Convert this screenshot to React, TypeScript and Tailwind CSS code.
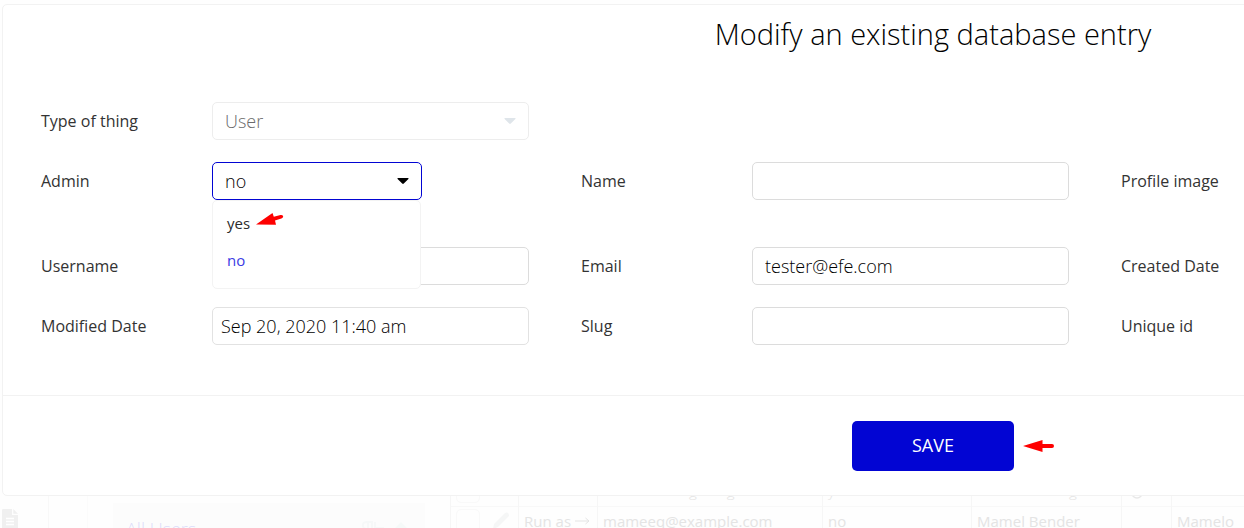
import { useState } from "react";
import type { ReactNode } from "react";

const box =
  "h-[38px] w-full appearance-none rounded-[5px] border border-[#dcdcdc] bg-white px-3 text-lg font-light text-black outline-none";

function Field({ id, label, children }: { id: string; label: string; children?: ReactNode }) {
  return (
    <div className="flex h-[38px] items-center">
      <label htmlFor={id} className="w-[171px] shrink-0 text-base text-[#333]">
        {label}
      </label>
      <div className="relative w-[317px]">
        {children ?? <input id={id} type="text" className={box} />}
      </div>
    </div>
  );
}

function Caret({ className }: { className: string }) {
  return (
    <svg viewBox="0 0 12 7" className={className} aria-hidden="true">
      <path d="M1 0h10q1 .2.4 1L6.8 5.6q-.8.8-1.6 0L.6 1Q0 .2 1 0Z" fill="currentColor" />
    </svg>
  );
}

function AdminField() {
  const [value, setValue] = useState("no");
  return (
    <div className="relative w-[210px]">
      <select
        id="admin"
        value={value}
        onChange={(e) => setValue(e.target.value)}
        className="block h-[38px] w-full appearance-none rounded-[5px] border border-[#0205d3] bg-white px-3 text-lg font-light text-black outline-none"
      >
        <option value="yes">yes</option>
        <option value="no">no</option>
      </select>
      <Caret className="pointer-events-none absolute right-[13px] top-4 h-[7px] w-3 text-black" />
      <div className="absolute left-0 top-full z-10 flex h-[89px] w-[209px] flex-col rounded-[5px] border border-[#f3f3f3] bg-white pt-1">
        {["yes", "no"].map((option) => (
          <button
            key={option}
            type="button"
            onClick={() => setValue(option)}
            className={
              option === value
                ? "flex h-[37px] items-center px-3.5 text-[15px] text-[#3a3ae4]"
                : "flex h-[37px] items-center px-3.5 text-[15px] text-[#2b2b2b]"
            }
          >
            {option}
          </button>
        ))}
        <svg viewBox="0 0 28 13" className="absolute left-[43px] top-3 h-[13px] w-7" aria-hidden="true">
          <path d="M0 11.6 16.5 0 17.8 3.8 24.5 2Q27.3 1.6 27.2 3.6 27 5 25.4 5.6L19 7.6 20 11.8Z" fill="#fe0000" />
        </svg>
      </div>
    </div>
  );
}

function Backdrop() {
  const cell = "border-x border-[#f6f6f6] px-[5px]";
  return (
    <div className="flex h-8 overflow-hidden text-[15px] text-[#e4e4e4]">
      <div className="flex w-[49px] shrink-0 border-r border-[#f8f8f8] pl-0.5 pt-[13px]">
        <svg viewBox="0 0 16 21" className="h-[21px] w-4" aria-hidden="true">
          <path d="M1 0h9v6h6v15H0V1Q0 0 1 0ZM11.300 0 16 4.800h-4.700Z" fill="#f0f0f0" />
          <path d="M4 9.500h8M4 12.500h8M4 15.500h8" stroke="#fff" strokeWidth="1.300" />
        </svg>
      </div>
      <div className="w-[39px] shrink-0 border-r border-[#fbfbfb]" />
      <div className="ml-[25px] mt-[7px] flex h-12 w-[312px] shrink-0 items-start bg-[#fcfcfc] pl-[13px] pt-3.5">
        <span className="text-lg font-light leading-6 text-[#dcdcfa]">All Users</span>
        <svg viewBox="0 0 50 20" className="ml-auto mr-4 mt-1 h-5 w-[50px]" aria-hidden="true">
          <path d="M8 1C3 1 2 7 8 8h1V1h5M9 8v10M13 1v17M16 1v15h8V7h-8" fill="none" stroke="#f6f8f8" strokeWidth="2" />
          <path d="m36 7 6-6 6 6Z" fill="#f5f9f8" />
        </svg>
      </div>
      <table className="-mt-5 ml-[25px] h-[60px] w-[1400px] shrink-0 table-fixed border-collapse">
        <colgroup>
          <col className="w-[68px]" />
          <col className="w-[79px]" />
          <col className="w-[225px]" />
          <col className="w-[149px]" />
          <col className="w-[150px]" />
          <col className="w-[50px]" />
          <col />
        </colgroup>
        <tbody>
          <tr className="h-[30px] border-b border-[#f8f8f8] leading-5">
            <td className={cell}>
              <div className="h-6 w-6 rounded-[5px] border border-[#f9f9f9]" />
            </td>
            <td className={cell} />
            <td className={cell}>
              <div className="flex gap-[30px] pl-[86px] font-light">
                <span>g</span>
                <span>g</span>
              </div>
            </td>
            <td className="border-x border-[#f6f6f6] px-[5px] font-light">y</td>
            <td className={cell}>
              <span className="pl-[92px] font-light">g</span>
            </td>
            <td className={cell}>
              <svg viewBox="0 0 12 12" className="ml-1 mt-1 h-3 w-3" aria-hidden="true">
                <circle cx="6" cy="6" r="5" fill="none" stroke="#e8e8e8" strokeWidth="1.500" />
              </svg>
            </td>
            <td className={cell} />
          </tr>
          <tr className="h-[30px] leading-5">
            <td className={cell}>
              <div className="flex items-center gap-3">
                <div className="h-6 w-6 rounded-[5px] border border-[#f9f9f9]" />
                <svg viewBox="0 0 18 18" className="h-[18px] w-[18px]" aria-hidden="true">
                  <path d="m1 17 1-5L13 1q2-1 3 0t1 3L6 15Z" fill="#f5f6f6" />
                </svg>
              </div>
            </td>
            <td className={cell}>
              <span className="flex items-center gap-1 whitespace-nowrap">
                Run as
                <svg viewBox="0 0 15 8" className="h-2 w-[15px]" aria-label="→">
                  <path d="M0 4h14M10.500 1 14 4l-3.500 3" fill="none" stroke="currentColor" />
                </svg>
              </span>
            </td>
            <td className={cell}>mameeq@example.com</td>
            <td className={cell}>no</td>
            <td className={cell}>Mamel Bender</td>
            <td className={cell} />
            <td className={cell}>Mamelo</td>
          </tr>
        </tbody>
      </table>
    </div>
  );
}

export default function App() {
  return (
    <main className="overflow-hidden bg-[#fefefe] pt-1 font-['Open_Sans','Noto_Sans',sans-serif]">
      <form
        className="ml-0.5 w-[1862px] rounded-[5px] border border-[#f2f2f2] bg-white"
        onSubmit={(e) => e.preventDefault()}
      >
        <h1 className="pt-[9px] text-center text-[29px] font-light leading-10 text-black">
          Modify an existing database entry
        </h1>
        <div className="pb-[50px] pl-[38px] pt-12">
          <Field id="type" label="Type of thing">
            <select
              id="type"
              disabled
              className="block h-[38px] w-full appearance-none rounded-[5px] border border-[#ededed] bg-white px-3 text-lg font-light text-[#6b6b6b] opacity-100"
            >
              <option>User</option>
            </select>
            <Caret className="pointer-events-none absolute right-[13px] top-4 h-[7px] w-3 text-[#dfe5ea]" />
          </Field>
          <div className="mt-[22px] grid grid-cols-[540px_540px_540px]">
            <Field id="admin" label="Admin">
              <AdminField />
            </Field>
            <Field id="name" label="Name" />
            <Field id="image" label="Profile image" />
          </div>
          <div className="mt-[47px] grid grid-cols-[540px_540px_540px] gap-y-[22px]">
            <Field id="username" label="Username" />
            <Field id="email" label="Email">
              <input id="email" type="email" defaultValue="tester@efe.com" className={box} />
            </Field>
            <Field id="created" label="Created Date" />
            <Field id="modified" label="Modified Date">
              <input
                id="modified"
                type="text"
                defaultValue="Sep 20, 2020 11:40 am"
                className="h-[38px] w-full rounded-[5px] border border-[#e2e2e2] bg-white px-2 text-lg font-light text-black outline-none"
              />
            </Field>
            <Field id="slug" label="Slug" />
            <Field id="unique" label="Unique id" />
          </div>
        </div>
        <div className="flex justify-center border-t border-[#f2f2f2] pb-6 pt-[25px]">
          <div className="relative">
            <button type="submit" className="h-[50px] w-[162px] rounded-[5px] bg-[#0205d3] pb-0.5 text-lg text-white">
              SAVE
            </button>
            <svg viewBox="0 0 31 12" className="absolute left-[171px] top-[19px] h-3 w-[31px]" aria-hidden="true">
              <path d="M0 6 19.500 0v4h9.500q2 0 2 2t-2 2h-9.500v4Z" fill="#fe0000" />
            </svg>
          </div>
        </div>
      </form>
      <Backdrop />
    </main>
  );
}
